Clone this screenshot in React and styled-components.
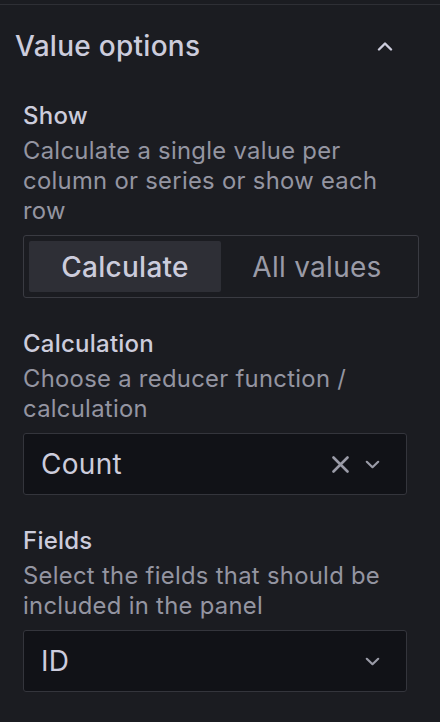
import React from "react";
import styled, { createGlobalStyle } from "styled-components";

const Global = createGlobalStyle`
  html, body { margin: 0; padding: 0; background: #1b1c21; }
  body { font-family: Inter, "Noto Sans", sans-serif; color: #ccccdc; -webkit-font-smoothing: antialiased; }
  * { box-sizing: border-box; }
`;

const Page = styled.div`
  width: 440px;
  min-height: 722px;
  padding-top: 4px;
  background: #1b1c21;
`;

const Section = styled.section`
  border-top: 1px solid #2e2f35;
`;

const Header = styled.div`
  display: flex;
  align-items: center;
  justify-content: space-between;
  padding: 24px 47px 0 15px;
`;

const Title = styled.h2`
  margin: 0;
  font-size: 28px;
  line-height: 34px;
  font-weight: 500;
  letter-spacing: 0.01em;
  color: #ccccdc;
`;

const Body = styled.div`
  display: flex;
  flex-direction: column;
  gap: 31px;
  padding: 38px 21px 0 23px;
`;

const Field = styled.div`
  display: flex;
  flex-direction: column;
`;

const Label = styled.div`
  font-size: 24px;
  line-height: 30px;
  font-weight: 500;
  letter-spacing: 0.01em;
  color: #ccccdc;
`;

const Description = styled.div`
  margin-top: 5px;
  margin-bottom: 9px;
  font-size: 23.8px;
  line-height: 30px;
  letter-spacing: 0.3px;
  color: #9495a1;
`;

const RadioGroup = styled.div`
  display: grid;
  grid-template-columns: 1fr 1fr;
  height: 63px;
  padding: 5px;
  border: 1px solid #3a3b42;
  border-radius: 3px;
`;

const RadioButton = styled.button`
  border: none;
  border-radius: 2px;
  font-family: inherit;
  font-size: 28px;
  letter-spacing: 0.01em;
  font-weight: ${(p) => (p.$active ? 500 : 400)};
  color: ${(p) => (p.$active ? "#ccccdc" : "#9a9ba7")};
  background: ${(p) => (p.$active ? "#2e2f36" : "transparent")};
  padding: 0;
  cursor: pointer;
`;

const Select = styled.div`
  display: flex;
  align-items: center;
  width: 384px;
  height: 62px;
  padding: 0 26px 0 17px;
  background: #111217;
  border: 1px solid #34353c;
  border-radius: 3px;
`;

const Value = styled.div`
  flex: 1;
  font-size: 28px;
  letter-spacing: 0.01em;
  color: #ccccdc;
`;

const Icons = styled.div`
  display: flex;
  align-items: center;
  gap: 16px;
`;

const ChevronUp = () => (
  <svg width="16" height="10" viewBox="0 0 16 10" fill="none">
    <path d="M2 8.5 L8 2.5 L14 8.5" stroke="#ccccdc" strokeWidth="2.4" strokeLinecap="round" strokeLinejoin="round" />
  </svg>
);

const ChevronDown = () => (
  <svg width="15" height="9" viewBox="0 0 15 9" fill="none">
    <path d="M1.8 1.8 L7.5 7.2 L13.2 1.8" stroke="#9a9ba7" strokeWidth="2.2" strokeLinecap="round" strokeLinejoin="round" />
  </svg>
);

const Cross = () => (
  <svg width="17" height="17" viewBox="0 0 17 17" fill="none">
    <path d="M1.5 1.5 L15.5 15.5 M15.5 1.5 L1.5 15.5" stroke="#9a9ba7" strokeWidth="2.6" strokeLinecap="round" />
  </svg>
);

export default function App() {
  return (
    <Page>
      <Global />
      <Section>
        <Header>
          <Title>Value options</Title>
          <ChevronUp />
        </Header>
        <Body>
          <Field>
            <Label>Show</Label>
            <Description>Calculate a single value per column or series or show each row</Description>
            <RadioGroup>
              <RadioButton $active>Calculate</RadioButton>
              <RadioButton>All values</RadioButton>
            </RadioGroup>
          </Field>
          <Field>
            <Label>Calculation</Label>
            <Description>Choose a reducer function / calculation</Description>
            <Select>
              <Value>Count</Value>
              <Icons>
                <Cross />
                <ChevronDown />
              </Icons>
            </Select>
          </Field>
          <Field>
            <Label>Fields</Label>
            <Description>Select the fields that should be included in the panel</Description>
            <Select>
              <Value>ID</Value>
              <Icons>
                <ChevronDown />
              </Icons>
            </Select>
          </Field>
        </Body>
      </Section>
    </Page>
  );
}
